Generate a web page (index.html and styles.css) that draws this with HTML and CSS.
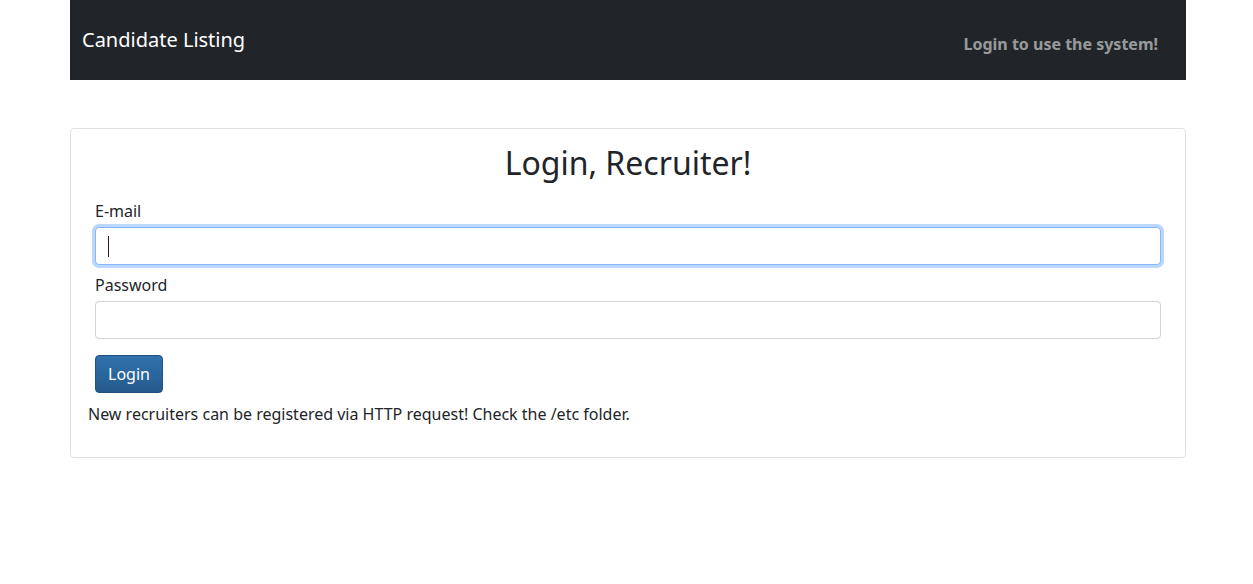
FILE: index.html
```html
<!DOCTYPE html>
<html lang="en">
<head>
<meta charset="utf-8">
<title>Candidate Listing</title>
<link rel="stylesheet" href="styles.css">
</head>
<body>
<div class="container">
  <nav class="navbar">
    <a class="brand" href="#">Candidate Listing</a>
    <span class="nav-note">Login to use the system!</span>
  </nav>
  <main class="card">
    <h1 class="title">Login, Recruiter!</h1>
    <form class="login-form">
      <label class="form-label" for="email">E-mail</label>
      <div class="field">
        <input id="email" class="form-control is-focused" type="email" autofocus>
        <span class="caret"></span>
      </div>
      <label class="form-label" for="password">Password</label>
      <div class="field">
        <input id="password" class="form-control" type="password">
      </div>
      <button class="btn" type="button">Login</button>
    </form>
    <p class="note">New recruiters can be registered via HTTP request! Check the /etc folder.</p>
  </main>
</div>
</body>
</html>
```

FILE: styles.css
```css
* { box-sizing: border-box; }
html, body { margin: 0; padding: 0; background: #fff; }
body {
  font-family: "Noto Sans", "Open Sans", sans-serif;
  font-size: 16px;
  line-height: 1.5;
  color: #212529;
}
.container {
  width: 1116px;
  margin: 0 0 0 70px;
}
.navbar {
  height: 80px;
  background: #212529;
  display: flex;
  align-items: center;
  justify-content: space-between;
  padding: 0 28px 0 12px;
}
.brand {
  color: #fff;
  font-size: 20px;
  text-decoration: none;
  margin-top: -1px;
}
.nav-note {
  color: rgba(255,255,255,0.55);
  font-weight: 700;
  margin-top: 8px;
}
.card {
  margin-top: 48px;
  border: 1px solid #dee2e6;
  border-radius: 4px;
  height: 330px;
  padding: 13px 16px 16px 16px;
}
.title {
  margin: 0 0 15px;
  font-size: 32px;
  font-weight: 400;
  line-height: 42px;
  text-align: center;
}
.login-form {
  padding: 0 8px;
  display: flex;
  flex-direction: column;
  align-items: flex-start;
}
.form-label {
  display: block;
  line-height: 24px;
  margin-bottom: 4px;
}
.field {
  position: relative;
  width: 100%;
  margin-bottom: 8px;
}
.form-control {
  display: block;
  width: 100%;
  height: 38px;
  border: 1px solid #ced4da;
  border-radius: 4px;
  padding: 6px 12px;
  font: inherit;
  color: #212529;
  background: #fff;
  outline: none;
}
.form-control.is-focused {
  border-color: #86b7fe;
  box-shadow: 0 0 0 3px rgba(13,110,253,0.28);
  caret-color: transparent;
}
.caret {
  position: absolute;
  left: 13px;
  top: 9px;
  width: 1px;
  height: 21px;
  background: #212529;
}
.btn {
  margin-top: 8px;
  height: 38px;
  padding: 0 12px;
  font: inherit;
  color: #fff;
  background: linear-gradient(#3072ad, #245a8d);
  border: 1px solid #1e4f7e;
  border-radius: 4px;
  cursor: pointer;
}
.note {
  margin: 9px 0 0;
  padding-left: 1px;
}
```
